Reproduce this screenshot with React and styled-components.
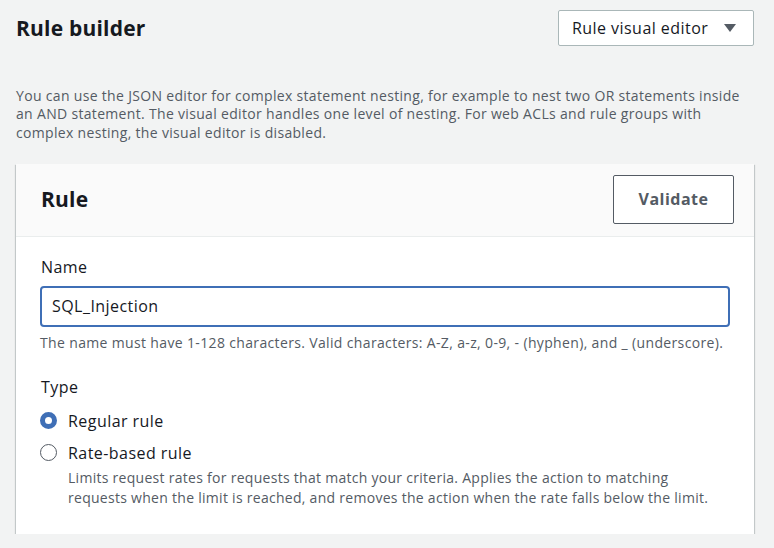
import React from "react";
import styled, { createGlobalStyle } from "styled-components";

const GlobalStyle = createGlobalStyle`
  html, body {
    margin: 0;
    padding: 0;
    background: #f2f3f3;
  }
  body {
    font-family: "Open Sans", "Noto Sans", "Liberation Sans", Arial, sans-serif;
    color: #16191f;
    -webkit-font-smoothing: antialiased;
  }
  * { box-sizing: border-box; }
`;

const Page = styled.div`
  padding: 10px 20px 0 16px;
`;

const TopBar = styled.div`
  display: flex;
  align-items: center;
  justify-content: space-between;
  height: 36px;
`;

const PageTitle = styled.h2`
  margin: 0;
  font-size: 21px;
  font-weight: 700;
  letter-spacing: 0.2px;
  color: #16191f;
`;

const Select = styled.button`
  display: flex;
  align-items: center;
  justify-content: space-between;
  width: 196px;
  height: 36px;
  padding: 0 17px 0 13px;
  background: #fff;
  border: 1px solid #aab7b8;
  border-radius: 2px;
  font: inherit;
  font-size: 16px;
  color: #16191f;
  letter-spacing: 0.45px;
  cursor: pointer;
`;

const Caret = styled.svg`
  width: 12px;
  height: 8px;
  fill: #545b64;
`;

const Intro = styled.p`
  margin: 41px 0 0;
  font-size: 14px;
  line-height: 18.3px;
  color: #545b64;
  letter-spacing: 0.32px;
`;

const Card = styled.section`
  margin-top: 22px;
  background: #fff;
  box-shadow: 0 1px 1px 0 rgba(0, 28, 36, 0.3), 1px 1px 1px 0 rgba(0, 28, 36, 0.15),
    -1px 1px 1px 0 rgba(0, 28, 36, 0.15);
`;

const CardHeader = styled.div`
  display: flex;
  align-items: center;
  justify-content: space-between;
  padding: 11px 20px 12px 25px;
  background: #fafafa;
  border-bottom: 1px solid #eaeded;
`;

const CardTitle = styled.h3`
  margin: 0;
  font-size: 21px;
  font-weight: 700;
  letter-spacing: 0.2px;
  color: #16191f;
`;

const OutlineButton = styled.button`
  width: 121px;
  height: 49px;
  background: #fff;
  border: 1px solid #545b64;
  border-radius: 2px;
  font: inherit;
  font-size: 16px;
  font-weight: 700;
  color: #545b64;
  letter-spacing: 0.5px;
  cursor: pointer;
`;

const CardBody = styled.div`
  padding: 19px 24px 26px 24px;
`;

const Field = styled.div`
  display: flex;
  flex-direction: column;
  margin-top: ${(p) => p.$gap || 0}px;
`;

const Label = styled.label`
  font-size: 16px;
  line-height: 22px;
  color: #16191f;
  margin-left: 1px;
  letter-spacing: 0.45px;
`;

const TextInput = styled.input`
  margin-top: 8px;
  height: 41px;
  width: 100%;
  padding: 0 10px;
  border: 2px solid #3f6fb6;
  border-radius: 4px;
  font: inherit;
  font-size: 16px;
  color: #16191f;
  letter-spacing: 0.45px;
  outline: none;
`;

const Hint = styled.div`
  margin-top: 7px;
  font-size: 14px;
  line-height: 18px;
  color: #545b64;
  letter-spacing: 0.35px;
`;

const RadioGroup = styled.div`
  display: flex;
  flex-direction: column;
  margin-top: 12px;
  gap: 10px;
`;

const RadioRow = styled.label`
  display: grid;
  grid-template-columns: 17px 1fr;
  column-gap: 11px;
  align-items: center;
  cursor: pointer;
`;

const RadioDot = styled.span`
  width: 17px;
  height: 17px;
  border-radius: 50%;
  ${(p) =>
    p.$checked
      ? `background: #fff; border: 5px solid #3f6fb6;`
      : `background: #fff; border: 1.5px solid #545b64;`}
`;

const RadioText = styled.span`
  font-size: 16px;
  line-height: 22px;
  color: #16191f;
  letter-spacing: 0.45px;
`;

const RadioDesc = styled.span`
  grid-column: 2;
  font-size: 14px;
  line-height: 20px;
  color: #545b64;
  letter-spacing: 0.28px;
  margin-top: 4px;
`;

export default function App() {
  return (
    <>
      <GlobalStyle />
      <Page>
        <TopBar>
          <PageTitle>Rule builder</PageTitle>
          <Select type="button">
            <span>Rule visual editor</span>
            <Caret viewBox="0 0 12 8">
              <polygon points="0,0 12,0 6,8" />
            </Caret>
          </Select>
        </TopBar>
        <Intro>
          You can use the JSON editor for complex statement nesting, for example to nest two OR
          statements inside an AND statement. The visual editor handles one level of nesting. For
          web ACLs and rule groups with complex nesting, the visual editor is disabled.
        </Intro>
        <Card>
          <CardHeader>
            <CardTitle>Rule</CardTitle>
            <OutlineButton type="button">Validate</OutlineButton>
          </CardHeader>
          <CardBody>
            <Field>
              <Label>Name</Label>
              <TextInput defaultValue="SQL_Injection" />
              <Hint>
                The name must have 1-128 characters. Valid characters: A-Z, a-z, 0-9, - (hyphen),
                and _ (underscore).
              </Hint>
            </Field>
            <Field $gap={24}>
              <Label>Type</Label>
              <RadioGroup>
                <RadioRow>
                  <RadioDot $checked />
                  <RadioText>Regular rule</RadioText>
                </RadioRow>
                <RadioRow>
                  <RadioDot />
                  <RadioText>Rate-based rule</RadioText>
                  <RadioDesc>
                    Limits request rates for requests that match your criteria. Applies the action
                    to matching requests when the limit is reached, and removes the action when the
                    rate falls below the limit.
                  </RadioDesc>
                </RadioRow>
              </RadioGroup>
            </Field>
          </CardBody>
        </Card>
      </Page>
    </>
  );
}
